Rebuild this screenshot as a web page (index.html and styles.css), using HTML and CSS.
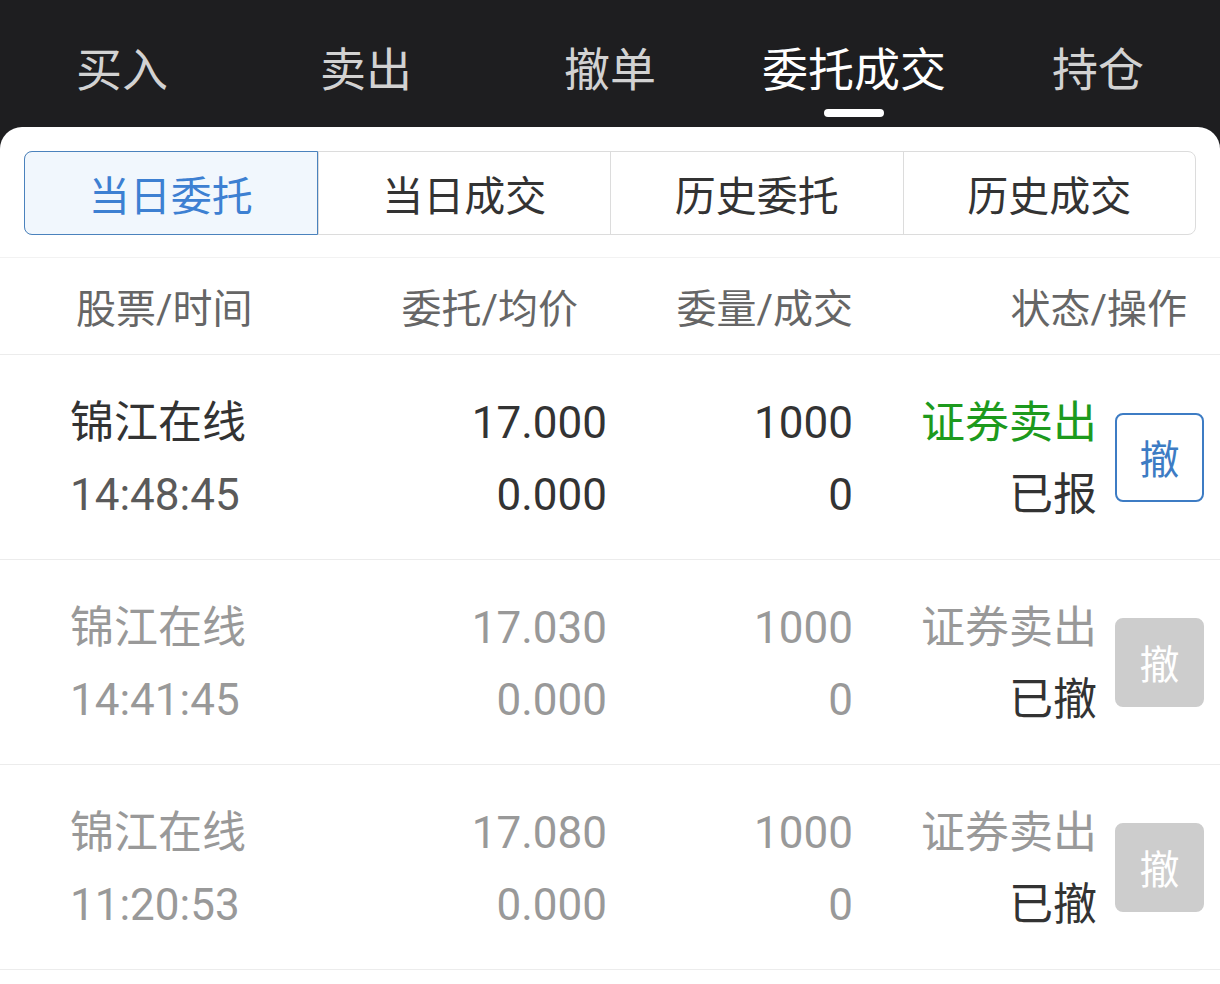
FILE: index.html
```html
<!DOCTYPE html>
<html lang="zh-CN">

<head>
    <meta charset="UTF-8">
    <meta name="viewport" content="width=device-width, initial-scale=1.0">
    <title>委托成交</title>
    <link rel="stylesheet" href="styles.css">
</head>

<body>
    <div class="page">
        <div class="topbar">
            <div class="tab">买入</div>
            <div class="tab">卖出</div>
            <div class="tab">撤单</div>
            <div class="tab active">委托成交</div>
            <div class="tab">持仓</div>
        </div>
        <div class="panel">
            <div class="seg">
                <div class="seg-item on">当日委托</div>
                <div class="seg-item">当日成交</div>
                <div class="seg-item">历史委托</div>
                <div class="seg-item">历史成交</div>
            </div>
            <div class="thead">
                <div class="c1">股票/时间</div>
                <div class="c2">委托/均价</div>
                <div class="c3">委量/成交</div>
                <div class="c4">状态/操作</div>
            </div>
            <!-- 委托列表 -->
            <div class="row">
                <div class="c1"><p class="name">锦江在线</p><p class="time">14:48:45</p></div>
                <div class="c2"><p>17.000</p><p>0.000</p></div>
                <div class="c3"><p>1000</p><p>0</p></div>
                <div class="c4">
                    <div class="state"><p class="sell">证券卖出</p><p class="dark">已报</p></div>
                    <div class="btn">撤</div>
                </div>
            </div>
            <div class="row done">
                <div class="c1"><p class="name">锦江在线</p><p class="time">14:41:45</p></div>
                <div class="c2"><p>17.030</p><p>0.000</p></div>
                <div class="c3"><p>1000</p><p>0</p></div>
                <div class="c4">
                    <div class="state"><p class="sell">证券卖出</p><p class="dark">已撤</p></div>
                    <div class="btn">撤</div>
                </div>
            </div>
            <div class="row done">
                <div class="c1"><p class="name">锦江在线</p><p class="time">11:20:53</p></div>
                <div class="c2"><p>17.080</p><p>0.000</p></div>
                <div class="c3"><p>1000</p><p>0</p></div>
                <div class="c4">
                    <div class="state"><p class="sell">证券卖出</p><p class="dark">已撤</p></div>
                    <div class="btn">撤</div>
                </div>
            </div>
        </div>
    </div>
</body>

</html>
```

FILE: styles.css
```css
* {
    margin: 0;
    padding: 0;
    box-sizing: border-box;
}

body {
    background: #1e1e20;
    font-family: Roboto, "Noto Sans CJK SC", sans-serif;
}

.page {
    width: 1220px;
    min-height: 984px;
    display: flex;
    flex-direction: column;
}

.topbar {
    height: 127px;
    display: grid;
    grid-template-columns: repeat(5, 1fr);
    background: #1e1e20;
}

.topbar .tab {
    text-align: center;
    font-size: 46px;
    line-height: 46px;
    padding-top: 47px;
    color: #d2d2d2;
    position: relative;
}

.topbar .tab.active {
    color: #fff;
}

.topbar .tab.active::after {
    content: "";
    position: absolute;
    left: 50%;
    top: 109px;
    width: 60px;
    height: 8px;
    margin-left: -30px;
    border-radius: 4px;
    background: #fff;
}

.panel {
    flex: 1;
    background: #fff;
    border-radius: 22px 22px 0 0;
    padding-top: 24px;
}

.seg {
    margin: 0 24px;
    height: 84px;
    display: flex;
    border: 1px solid #dcdcdc;
    border-radius: 8px;
}

.seg-item {
    flex: 1;
    display: flex;
    align-items: center;
    justify-content: center;
    font-size: 41px;
    color: #333;
    border-left: 1px solid #dcdcdc;
}

.seg-item:first-child {
    border-left: none;
}

.seg-item.on {
    margin: -1px 0 -1px -1px;
    border: 1px solid #4a82bd;
    border-radius: 8px 0 0 8px;
    background: #f1f7fd;
    color: #3d80d2;
}

.thead {
    margin-top: 22px;
    height: 98px;
    display: flex;
    align-items: center;
    border-top: 1px solid #f2f2f2;
    border-bottom: 1px solid #ececec;
    font-size: 40px;
    color: #666;
}

.c1 {
    width: 305px;
    padding-left: 70px;
}

.c2 {
    width: 302px;
    text-align: right;
}

.c3 {
    width: 246px;
    text-align: right;
}

.c4 {
    flex: 1;
    display: flex;
    justify-content: flex-end;
    align-items: center;
    padding-right: 16px;
}

.thead .c1 {
    padding-left: 76px;
}

.thead .c2 {
    padding-right: 29px;
}

.thead .c4 {
    padding-right: 33px;
}

.row {
    height: 205px;
    padding-top: 4px;
    display: flex;
    align-items: center;
    border-bottom: 1px solid #ececec;
    font-size: 44px;
    color: #333;
}

.row p {
    line-height: 72px;
    white-space: nowrap;
}

.row .time {
    color: #5a5a5a;
}

.state {
    text-align: right;
    margin-right: 18px;
}

.sell {
    color: #1d9a1d;
}

.dark {
    color: #333;
}

.btn {
    width: 89px;
    height: 89px;
    margin-top: -4px;
    border: 2px solid #3d7cc4;
    border-radius: 8px;
    display: flex;
    align-items: center;
    justify-content: center;
    font-size: 40px;
    color: #3d7cc4;
}

.row.done,
.row.done .time,
.row.done .sell {
    color: #999;
}

.row.done .dark {
    color: #333;
}

.row.done .btn {
    border-color: #cdcdcd;
    background: #cdcdcd;
    color: #fff;
}
```
